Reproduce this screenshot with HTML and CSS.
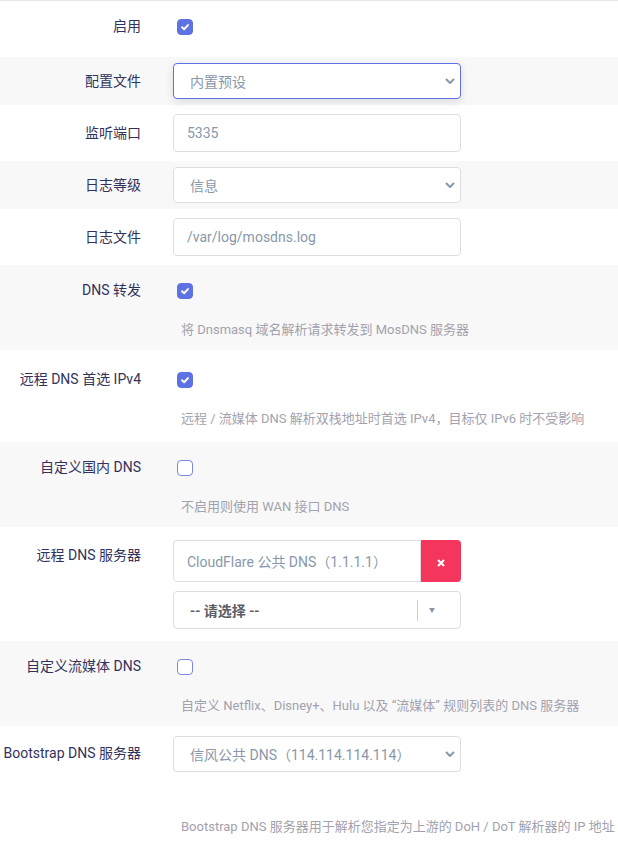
FILE: index.html
```html
<!DOCTYPE html>
<html lang="zh-CN">
<head>
  <meta charset="UTF-8" />
  <meta name="viewport" content="width=device-width, initial-scale=1.0"/>
  <title>MosDNS - 基本设置</title>
  <link rel="stylesheet" href="styles.css">
</head>
<body>
  <div class="form">

    <div class="row row-check row-first">
      <div class="title">启用</div>
      <div class="field">
        <div class="check-line">
          <span class="check on"><svg viewBox="0 0 16 16"><path d="M4.6 8.3 L7 10.6 L11.4 5.8"/></svg></span>
        </div>
      </div>
    </div>

    <div class="row row-select">
      <div class="title">配置文件</div>
      <div class="field">
        <div class="select focus">
          <span>内置预设</span>
          <svg class="chev" viewBox="0 0 10 6"><path d="M1 1 L5 5 L9 1"/></svg>
        </div>
      </div>
    </div>

    <div class="row row-input">
      <div class="title">监听端口</div>
      <div class="field">
        <div class="input">5335</div>
      </div>
    </div>

    <div class="row row-select">
      <div class="title">日志等级</div>
      <div class="field">
        <div class="select">
          <span>信息</span>
          <svg class="chev" viewBox="0 0 10 6"><path d="M1 1 L5 5 L9 1"/></svg>
        </div>
      </div>
    </div>

    <div class="row row-input">
      <div class="title">日志文件</div>
      <div class="field">
        <div class="input">/var/log/mosdns.log</div>
      </div>
    </div>

    <div class="row row-check">
      <div class="title">DNS 转发</div>
      <div class="field">
        <div class="check-line">
          <span class="check on"><svg viewBox="0 0 16 16"><path d="M4.6 8.3 L7 10.6 L11.4 5.8"/></svg></span>
        </div>
        <div class="desc">将 Dnsmasq 域名解析请求转发到 MosDNS 服务器</div>
      </div>
    </div>

    <div class="row row-check row-tall">
      <div class="title">远程 DNS 首选 IPv4</div>
      <div class="field">
        <div class="check-line">
          <span class="check on"><svg viewBox="0 0 16 16"><path d="M4.6 8.3 L7 10.6 L11.4 5.8"/></svg></span>
        </div>
        <div class="desc">远程 / 流媒体 DNS 解析双栈地址时首选 IPv4，目标仅 IPv6 时不受影响</div>
      </div>
    </div>

    <div class="row row-check">
      <div class="title">自定义国内 DNS</div>
      <div class="field">
        <div class="check-line">
          <span class="check"></span>
        </div>
        <div class="desc">不启用则使用 WAN 接口 DNS</div>
      </div>
    </div>

    <div class="row row-list">
      <div class="title">远程 DNS 服务器</div>
      <div class="field">
        <div class="input-group">
          <div class="input">CloudFlare 公共 DNS（1.1.1.1）</div>
          <span class="btn-remove"><svg viewBox="0 0 8 8"><path d="M1 1 L7 7 M7 1 L1 7"/></svg></span>
        </div>
        <div class="picker">
          <span class="picker-text">-- 请选择 --</span>
          <span class="picker-sep"></span>
          <span class="picker-arrow"><i></i></span>
        </div>
      </div>
    </div>

    <div class="row row-check">
      <div class="title">自定义流媒体 DNS</div>
      <div class="field">
        <div class="check-line">
          <span class="check"></span>
        </div>
        <div class="desc">自定义 Netflix、Disney+、Hulu 以及 “流媒体” 规则列表的 DNS 服务器</div>
      </div>
    </div>

    <div class="row row-last">
      <div class="title">Bootstrap DNS 服务器</div>
      <div class="field">
        <div class="select">
          <span>信风公共 DNS（114.114.114.114）</span>
          <svg class="chev" viewBox="0 0 10 6"><path d="M1 1 L5 5 L9 1"/></svg>
        </div>
        <div class="desc desc-far">Bootstrap DNS 服务器用于解析您指定为上游的 DoH / DoT 解析器的 IP 地址</div>
      </div>
    </div>

  </div>
</body>
</html>
```

FILE: styles.css
```css
body {
  margin: 0;
  font-family: Roboto, "Noto Sans CJK SC", sans-serif;
  background-color: #ffffff;
  color: #32325d;
}
.form {
  border-top: 1px solid #e4e4ee;
}
.row {
  display: flex;
  gap: 32px;
}
.row:nth-child(even) {
  background-color: #f8f8f9;
}
.title {
  flex: none;
  width: 141px;
  height: 20px;
  text-align: right;
  font-size: 14px;
  line-height: 20px;
  color: #32325d;
  white-space: nowrap;
}
.field {
  flex: 1;
  min-width: 0;
}

/* checkbox rows */
.row-check {
  padding: 15px 0 10px 0;
}
.row-first {
  padding-bottom: 21px;
}
.row-tall {
  padding: 19px 0 13px 0;
}
.check-line {
  box-sizing: border-box;
  height: 20px;
  padding: 3px 0 0 4px;
}
.check {
  display: block;
  box-sizing: border-box;
  width: 16px;
  height: 16px;
  border: 1px solid #7c88e6;
  border-radius: 4px;
  background-color: #ffffff;
}
.check.on {
  border-color: #5e72e4;
  background-color: #5e72e4;
}
.check svg {
  display: block;
  width: 14px;
  height: 14px;
  fill: none;
  stroke: #ffffff;
  stroke-width: 2.2;
  stroke-linecap: round;
  stroke-linejoin: round;
}
.desc {
  height: 20px;
  margin-top: 20px;
  padding-left: 8px;
  font-size: 13px;
  line-height: 20px;
  color: #a2a2ae;
  white-space: nowrap;
}

/* select and text rows */
.row-select {
  padding: 6px 0;
}
.row-select .title {
  padding-top: 8px;
}
.row-input {
  padding: 9px 0;
}
.row-input .title {
  padding-top: 9px;
}
.input,
.select {
  box-sizing: border-box;
  display: flex;
  align-items: center;
  width: 288px;
  height: 38px;
  padding: 0 13px;
  border: 1px solid #dddee5;
  border-radius: 4px;
  background-color: #ffffff;
  font-size: 14px;
  color: #8898aa;
  white-space: nowrap;
}
.select {
  justify-content: space-between;
  height: 36px;
  padding: 0 5px 0 16px;
}
.select.focus {
  border-color: #5e72e4;
  box-shadow: 0 3px 9px rgba(50, 50, 93, 0.13);
}
.chev {
  width: 10px;
  height: 6px;
  fill: none;
  stroke: #8898aa;
  stroke-width: 2;
}

/* dynamic list */
.row-list {
  padding: 13px 0 12px 0;
}
.row-list .title {
  padding-top: 5px;
}
.input-group {
  display: flex;
  width: 288px;
}
.input-group .input {
  flex: 1;
  width: auto;
  height: 42px;
  border-radius: 4px 0 0 4px;
}
.btn-remove {
  display: flex;
  align-items: center;
  justify-content: center;
  width: 40px;
  height: 42px;
  border-radius: 0 4px 4px 0;
  background-color: #f5365c;
}
.btn-remove svg {
  width: 8px;
  height: 8px;
  margin-top: 3px;
  stroke: #ffffff;
  stroke-width: 2;
}
.picker {
  box-sizing: border-box;
  display: flex;
  align-items: center;
  width: 288px;
  height: 38px;
  margin-top: 9px;
  border: 1px solid #dddee5;
  border-radius: 4px;
  background-color: #ffffff;
}
.picker-text {
  flex: 1;
  padding-left: 16px;
  font-size: 14px;
  font-weight: 600;
  color: #5d5d66;
}
.picker-sep {
  width: 1px;
  height: 21px;
  background-color: #cfcfd6;
}
.picker-arrow {
  width: 42px;
  padding-left: 11px;
  box-sizing: border-box;
}
.picker-arrow i {
  display: block;
  width: 0;
  height: 0;
  border-left: 3.5px solid transparent;
  border-right: 3.5px solid transparent;
  border-top: 5px solid #8898aa;
}

/* last row */
.row-last {
  padding: 10px 0 10px 0;
}
.row-last .title {
  padding-top: 7px;
}
.desc-far {
  margin-top: 45px;
}
```
